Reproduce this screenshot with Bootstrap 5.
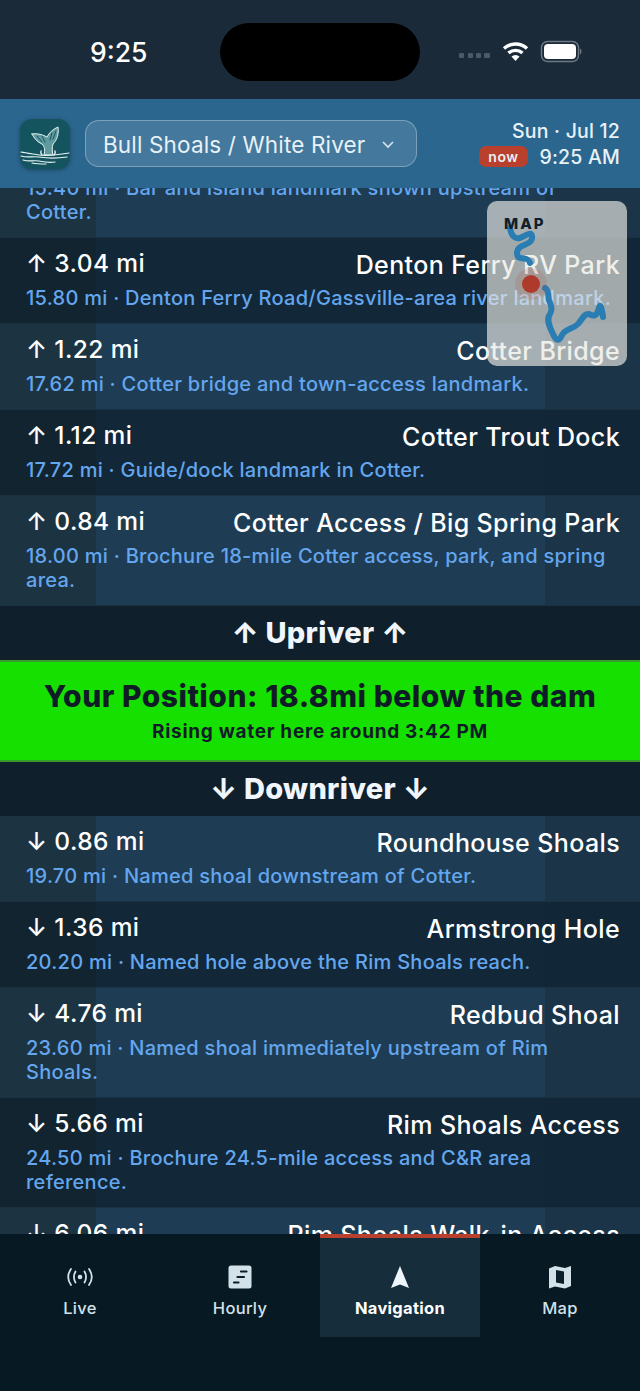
<!DOCTYPE html>
<html lang="en">
<head>
  <meta charset="UTF-8">
  <meta name="viewport" content="width=device-width, initial-scale=1.0">
  <title>Navigation</title>
  <link rel="stylesheet" href="https://cdn.jsdelivr.net/npm/bootstrap@5.3.3/dist/css/bootstrap.min.css">
  <style>
    body { background: #071a24; font-family: Inter, "Noto Sans", sans-serif; }
    .app-shell { width: 640px; height: 1391px; overflow: hidden; position: relative; }

    .status-bar { height: 99px; background: #1a2a38; color: #fff; padding: 23px 57px 0 90px; }
    .status-time { font-size: 26.500px; font-weight: 500; line-height: 58px; width: 130px; }
    .island { width: 200px; height: 58px; border-radius: 29px; background: #000; }
    .status-icons { width: 124px; margin-left: 39px; height: 58px; }

    .top-header { height: 89px; background: #2b668f; padding: 0 20px; color: #e8f1f6; position: relative; z-index: 2; }
    .app-logo { width: 50px; height: 50px; border-radius: 12px; background: #14545f; box-shadow: 0 1px 4px rgba(0,0,0,.35); flex: none; }
    .river-pill { width: 332px; height: 47px; margin-left: 15px; padding: 2px 17px 0; border: 1.5px solid rgba(255,255,255,.3); border-radius: 14px; background: rgba(255,255,255,.12); font-size: 22.500px; letter-spacing: .15px; white-space: nowrap; }
    .date-line { font-size: 19.500px; line-height: 26px; letter-spacing: .2px; font-weight: 500; white-space: nowrap; }
    .now-badge { background: #b9402c; border-radius: 7px; font-size: 14px; font-weight: 600; line-height: 21px; padding: 0 9px; letter-spacing: .5px; margin-right: 12px; }

    .list-scroll { height: 1046px; overflow: hidden; position: relative; }
    .list-inner { margin-top: -60px; }
    .river-row { padding: 10px 20px 13px 26px; border-bottom: 1px solid #1a3142; }
    .row-dark { background: linear-gradient(90deg, #11242f 0 96px, #122839 96px 545px, #112636 545px); }
    .row-light { background: linear-gradient(90deg, #1c3342 0 96px, #1e3d54 96px 545px, #1b3447 545px); }
    .row-top { color: #fff; font-size: 24.500px; font-weight: 500; line-height: 30px; letter-spacing: .4px; }
    .row-name { font-size: 25px; letter-spacing: .38px; padding-top: 2px; white-space: nowrap; }
    .row-desc { color: #64a6ee; font-size: 20px; font-weight: 500; line-height: 24px; letter-spacing: .27px; margin-top: 6px; padding-right: 8px; }

    .dir-band { background: #0f1f2c; color: #f0f6fb; font-size: 29px; font-weight: 800; text-align: center; line-height: 54px; height: 54px; letter-spacing: .3px; }
    .pos-band { height: 102px; background: #16e000; border-top: 2px solid #3a9a2c; border-bottom: 2px solid #3a9a2c; color: #0f1c28; text-align: center; padding-top: 15px; }
    .pos-title { font-size: 30px; font-weight: 800; line-height: 38px; letter-spacing: .5px; white-space: nowrap; }
    .pos-sub { font-size: 19px; font-weight: 700; line-height: 24px; margin-top: 5px; letter-spacing: .7px; }

    .mini-map { position: absolute; left: 487px; top: 13px; width: 140px; height: 165px; border-radius: 10px; background: rgba(232,232,226,.68); }
    .mini-map-label { position: absolute; left: 17px; top: 14px; font-size: 15px; font-weight: 800; letter-spacing: 2px; line-height: 18px; color: #10202c; }

    .tab-bar { height: 157px; background: #071a24; position: relative; z-index: 2; }
    .tab-item { width: 160px; height: 103px; color: #d3e1e9; font-size: 16.500px; font-weight: 500; letter-spacing: .3px; padding-top: 31px; }
    .tab-item svg { display: block; height: 24px; margin-bottom: 7px; }
    .tab-active { background: #162d3c; color: #fff; font-weight: 700; border-top: 4px solid #b9402c; padding-top: 27px; }
  </style>
</head>
<body>
  <div class="app-shell d-flex flex-column">
    <!-- status bar -->
    <div class="status-bar d-flex">
      <div class="status-time">9:25</div>
      <div class="island"></div>
      <div class="status-icons d-flex align-items-center">
        <svg width="124" height="24" viewBox="0 0 124 24">
          <g fill="#4d5a66"><rect x="0" y="13" width="5" height="5" rx="1"/><rect x="9" y="13" width="5" height="5" rx="1"/><rect x="17" y="13" width="5" height="5" rx="1"/><rect x="25" y="13" width="6" height="5" rx="1"/></g>
          <g fill="none" stroke="#fff" stroke-width="3.400" stroke-linecap="butt"><path d="M45 8.500a17 17 0 0 1 23 0"/><path d="M49.500 13a10.500 10.500 0 0 1 14 0"/></g>
          <path d="M52.500 16.500a6 6 0 0 1 8 0L56.500 21z" fill="#fff"/>
          <rect x="82.500" y="1.500" width="37" height="20" rx="6" fill="none" stroke="#6d7883" stroke-width="1.500"/>
          <rect x="85" y="4" width="32" height="15" rx="4" fill="#fff"/>
          <path d="M121 8.500c2 .5 2 5.500 0 6z" fill="#6d7883"/>
        </svg>
      </div>
    </div>

    <!-- header -->
    <div class="top-header d-flex align-items-center">
      <div class="app-logo d-flex align-items-center justify-content-center">
        <svg width="50" height="50" viewBox="0 0 50 50" fill="none" stroke="#e6f2f2" stroke-linecap="round">
          <path d="M12 15C18 14 23 16 27 18 29 14 33 10 38 8 39 15 37 21 33 25 32 28 32 32 33 36L24 36C25 31 25 28 22 25 17 23 14 19 12 15z" fill="#5f9a9f" stroke-width="1"/>
          <path d="M17 17l5 6M22 17l3 6M32 14l-2 7M36 12l-3 8" stroke="#14545f" stroke-width="1"/>
          <path d="M22 36c-1-1-2-2-1-4M34 36c1-1 2-2 1-4" stroke-width="1.400"/>
          <path d="M1 33c5 1 12 2 18 3s18 0 30-2M1 37c7 2 12 0 18 1s15 2 28 0M3 41c6 2 11 0 16 1s9 2 16 1M12 44c5 1 10 1 14 1" stroke-width="1.200"/>
        </svg>
      </div>
      <div class="river-pill d-flex align-items-center justify-content-between">
        <span>Bull Shoals / White River</span>
        <svg width="14" height="10" viewBox="0 0 14 10" fill="none" stroke="#d7e5ee" stroke-width="1.600" class="me-1"><path d="M2 2l5 5 5-5"/></svg>
      </div>
      <div class="ms-auto text-end">
        <div class="date-line">Sun · Jul 12</div>
        <div class="date-line d-flex align-items-center justify-content-end">
          <span class="now-badge">now</span><span>9:25 AM</span>
        </div>
      </div>
    </div>

    <!-- list -->
    <div class="list-scroll">
      <div class="list-inner">
        <div class="river-row row-light">
          <div class="row-top d-flex justify-content-between"><span>↑ 2.64 mi</span><span class="row-name">Bar and Island</span></div>
          <div class="row-desc">15.40 mi · Bar and island landmark shown upstream of Cotter.</div>
        </div>
        <div class="river-row row-dark">
          <div class="row-top d-flex justify-content-between"><span>↑ 3.04 mi</span><span class="row-name">Denton Ferry RV Park</span></div>
          <div class="row-desc">15.80 mi · Denton Ferry Road/Gassville-area river landmark.</div>
        </div>
        <div class="river-row row-light">
          <div class="row-top d-flex justify-content-between"><span>↑ 1.22 mi</span><span class="row-name">Cotter Bridge</span></div>
          <div class="row-desc">17.62 mi · Cotter bridge and town-access landmark.</div>
        </div>
        <div class="river-row row-dark">
          <div class="row-top d-flex justify-content-between"><span>↑ 1.12 mi</span><span class="row-name">Cotter Trout Dock</span></div>
          <div class="row-desc">17.72 mi · Guide/dock landmark in Cotter.</div>
        </div>
        <div class="river-row row-light">
          <div class="row-top d-flex justify-content-between"><span>↑ 0.84 mi</span><span class="row-name">Cotter Access / Big Spring Park</span></div>
          <div class="row-desc">18.00 mi · Brochure 18-mile Cotter access, park, and spring area.</div>
        </div>

        <div class="dir-band">↑ Upriver ↑</div>
        <div class="pos-band">
          <div class="pos-title">Your Position: 18.8mi below the dam</div>
          <div class="pos-sub">Rising water here around 3:42 PM</div>
        </div>
        <div class="dir-band">↓ Downriver ↓</div>

        <div class="river-row row-light">
          <div class="row-top d-flex justify-content-between"><span>↓ 0.86 mi</span><span class="row-name">Roundhouse Shoals</span></div>
          <div class="row-desc">19.70 mi · Named shoal downstream of Cotter.</div>
        </div>
        <div class="river-row row-dark">
          <div class="row-top d-flex justify-content-between"><span>↓ 1.36 mi</span><span class="row-name">Armstrong Hole</span></div>
          <div class="row-desc">20.20 mi · Named hole above the Rim Shoals reach.</div>
        </div>
        <div class="river-row row-light">
          <div class="row-top d-flex justify-content-between"><span>↓ 4.76 mi</span><span class="row-name">Redbud Shoal</span></div>
          <div class="row-desc">23.60 mi · Named shoal immediately upstream of Rim Shoals.</div>
        </div>
        <div class="river-row row-dark">
          <div class="row-top d-flex justify-content-between"><span>↓ 5.66 mi</span><span class="row-name">Rim Shoals Access</span></div>
          <div class="row-desc">24.50 mi · Brochure 24.5-mile access and C&amp;R area reference.</div>
        </div>
        <div class="river-row row-light">
          <div class="row-top d-flex justify-content-between"><span>↓ 6.06 mi</span><span class="row-name">Rim Shoals Walk-in Access</span></div>
          <div class="row-desc">24.90 mi · Walk-in access.</div>
        </div>
      </div>

      <!-- floating mini map, sits over the list -->
      <div class="mini-map">
        <svg width="140" height="165" viewBox="0 0 140 165" fill="none" class="position-absolute top-0 start-0">
          <g stroke="#2a7db3" stroke-width="6" stroke-linecap="round" stroke-linejoin="round">
            <path d="M23 27C24 34 27 38 33 37 38 35 44 30 45 35 46 41 40 43 35 45 30 47 29 52 31 56 35 59 41 55 43 62"/>
            <path d="M58 87C62 89 61 95 62 99 64 104 66 108 63 113 59 118 62 125 66 133 69 140 72 141 75 134 78 128 86 128 91 123 95 119 97 112 102 113 106 115 109 116 111 110 112 106 113 103 114 106 115 110 116 113 116 116"/>
          </g>
          <circle cx="44" cy="83" r="16" fill="#b9402c" fill-opacity=".15"/>
          <circle cx="44" cy="83" r="9" fill="#ad3a2b"/>
        </svg>
        <div class="mini-map-label">MAP</div>
      </div>
    </div>

    <!-- tabs -->
    <div class="tab-bar d-flex align-items-start text-center">
      <div class="tab-item">
        <svg class="mx-auto" width="28" height="24" viewBox="0 0 28 24" fill="none" stroke="#d3e1e9" stroke-width="1.800" stroke-linecap="round">
          <circle cx="14" cy="12" r="2.300" fill="#d3e1e9" stroke="none"/>
          <path d="M9.500 6.500c-2 3.500-2 7.500 0 11M18.500 6.500c2 3.500 2 7.500 0 11M5 4c-3.500 5-3.500 11 0 16M23 4c3.500 5 3.500 11 0 16"/>
        </svg>
        Live
      </div>
      <div class="tab-item">
        <svg class="mx-auto" width="24" height="24" viewBox="0 0 24 24">
          <rect x="0.500" y="0.500" width="23" height="23" rx="2.500" fill="#d3e1e9"/>
          <g stroke="#0b1e2a" stroke-width="2.200" stroke-linecap="round"><path d="M13 6.500h5.500M9.500 12h6.500M6 17.500h4.500"/></g>
        </svg>
        Hourly
      </div>
      <div class="tab-item tab-active">
        <svg class="mx-auto" width="24" height="24" viewBox="0 0 24 24"><path d="M12 1l9 22-9-3.500L3 23z" fill="#eef6fb"/></svg>
        Navigation
      </div>
      <div class="tab-item">
        <svg class="mx-auto" width="24" height="24" viewBox="0 0 24 24">
          <path d="M1 3.500 7 1l10 2 6-2v20l-6 2.500-10-2-6 2z" fill="#d3e1e9"/>
          <path d="M8 5l8 1.500v12.500l-8-1.500z" fill="#0b1e2a"/>
        </svg>
        Map
      </div>
    </div>
  </div>
  <script src="https://cdn.jsdelivr.net/npm/bootstrap@5.3.3/dist/js/bootstrap.bundle.min.js"></script>
</body>
</html>
